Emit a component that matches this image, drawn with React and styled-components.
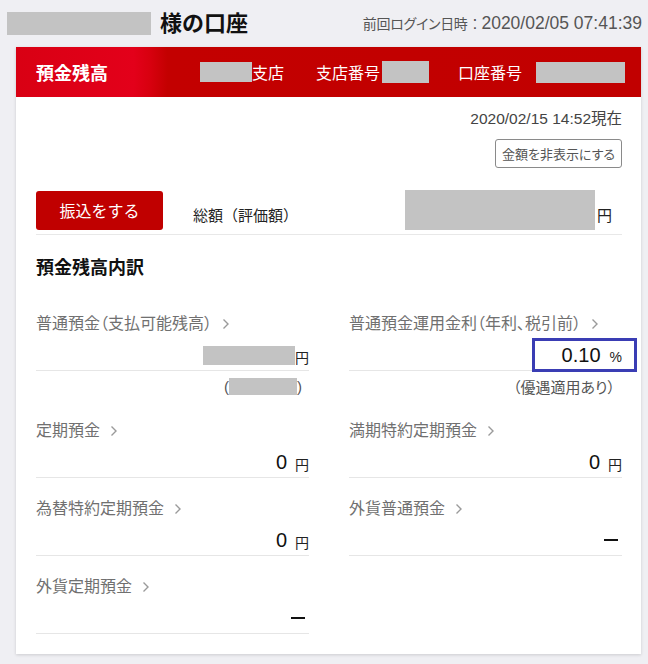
import React from "react";
import styled, { createGlobalStyle } from "styled-components";

const GlobalStyle = createGlobalStyle`
  body {
    margin: 0;
    background: #efeff3;
    font-family: "Liberation Sans", "Noto Sans CJK JP", sans-serif;
    color: #222;
  }
`;

const items = [
  { label: "普通預金（支払可能残高）", kind: "masked" },
  { label: "普通預金運用金利（年利、税引前）", kind: "rate" },
  { label: "定期預金", kind: "yen", amount: "0" },
  { label: "満期特約定期預金", kind: "yen", amount: "0" },
  { label: "為替特約定期預金", kind: "yen", amount: "0" },
  { label: "外貨普通預金", kind: "dash" },
  { label: "外貨定期預金", kind: "dash" },
];

function Chevron() {
  return (
    <ChevronIcon width="8" height="12" viewBox="0 0 8 12">
      <polyline points="1.5,1.5 6,6 1.5,10.5" fill="none" stroke="#9a9a9a" strokeWidth="1.4" />
    </ChevronIcon>
  );
}

function ItemValue({ item }) {
  if (item.kind === "masked") {
    return (
      <ValueRow>
        <Mask w={92} h={19} />
        <Yen tight>円</Yen>
      </ValueRow>
    );
  }
  if (item.kind === "rate") {
    return (
      <ValueRow>
        <Highlight>
          <Amount>0.10</Amount>
          <Percent>%</Percent>
        </Highlight>
      </ValueRow>
    );
  }
  if (item.kind === "dash") {
    return (
      <ValueRow>
        <Dash />
      </ValueRow>
    );
  }
  return (
    <ValueRow>
      <Amount>{item.amount}</Amount>
      <Yen>円</Yen>
    </ValueRow>
  );
}

function App() {
  return (
    <>
      <GlobalStyle />
      <TopBar>
        <Owner>
          <Mask w={144} h={23} />
          <PageTitle>様の口座</PageTitle>
        </Owner>
        <LastLogin>
          <LoginLabel>前回ログイン日時</LoginLabel>
          <Colon>:</Colon>
          2020/02/05 07:41:39
        </LastLogin>
      </TopBar>
      <Card>
        <RedBar>
          <BarTitle>預金残高</BarTitle>
          <BarInfo>
            <Mask w={52} h={20} />
            <BarLabel>支店</BarLabel>
            <BarLabel gap={30}>支店番号</BarLabel>
            <Mask w={47} h={22} />
            <BarLabel gap={29}>口座番号</BarLabel>
            <Mask w={89} h={21} gap={12} />
          </BarInfo>
        </RedBar>
        <Body>
          <AsOf>2020/02/15 14:52現在</AsOf>
          <HideRow>
            <HideButton>金額を非表示にする</HideButton>
          </HideRow>
          <TotalRow>
            <TransferButton>振込をする</TransferButton>
            <TotalLabel>総額（評価額）</TotalLabel>
            <TotalAmount>
              <Mask w={190} h={40} />
              <TotalYen>円</TotalYen>
            </TotalAmount>
          </TotalRow>
          <SectionTitle>預金残高内訳</SectionTitle>
          <Grid>
            {items.map((item) => (
              <Item key={item.label}>
                <Label>
                  {item.label}
                  <Chevron />
                </Label>
                <ItemValue item={item} />
                {item.kind === "masked" && (
                  <Note>
                    (<Mask w={68} h={17} />)
                  </Note>
                )}
                {item.kind === "rate" && <Note>（優遇適用あり）</Note>}
              </Item>
            ))}
          </Grid>
        </Body>
      </Card>
    </>
  );
}

export default App;

const TopBar = styled.div`
  display: flex;
  align-items: center;
  justify-content: space-between;
  padding: 12px 6px 0 7px;
  height: 23px;
`;

const Owner = styled.div`
  display: flex;
  align-items: center;
`;

const Mask = styled.span`
  display: inline-block;
  flex-shrink: 0;
  width: ${(p) => p.w}px;
  height: ${(p) => p.h}px;
  margin-left: ${(p) => p.gap || 0}px;
  background: #c3c3c3;
  vertical-align: middle;
`;

const PageTitle = styled.h1`
  margin: 0 0 0 9px;
  font-size: 22px;
  font-weight: 700;
  line-height: 24px;
  color: #111;
`;

const LastLogin = styled.div`
  display: flex;
  align-items: baseline;
  font-size: 17.5px;
  color: #555;
`;

const LoginLabel = styled.span`
  font-size: 14px;
  font-feature-settings: "palt";
  letter-spacing: -0.3px;
`;

const Colon = styled.span`
  margin: 0 4px 0 5px;
`;

const Card = styled.div`
  width: 625px;
  margin: 12px 0 10px 16px;
  background: #fff;
  box-shadow: 0 1px 3px rgba(0, 0, 0, 0.15);
`;

const RedBar = styled.div`
  display: flex;
  align-items: center;
  height: 50px;
  padding: 0 16px 0 20px;
  background: radial-gradient(circle at -110px 50%, #cf000d 0, #e3001a 228px, #d8000f 244px, #c30000 262px, #c10000 100%);
  color: #fff;
`;

const BarTitle = styled.div`
  font-size: 18px;
  font-weight: 700;
`;

const BarInfo = styled.div`
  display: flex;
  align-items: center;
  margin-left: auto;
`;

const BarLabel = styled.span`
  margin-left: ${(p) => p.gap || 0}px;
  margin-right: 2px;
  font-size: 16px;
`;

const Body = styled.div`
  padding: 12px 19px 20px 20px;
`;

const AsOf = styled.div`
  text-align: right;
  font-size: 15.5px;
  line-height: 20px;
  color: #444;
`;

const HideRow = styled.div`
  display: flex;
  justify-content: flex-end;
  margin-top: 10px;
`;

const HideButton = styled.button`
  height: 29px;
  padding: 0 6px;
  border: 1px solid #8a8a8a;
  border-radius: 3px;
  background: #fff;
  font-family: inherit;
  font-size: 13px;
  font-feature-settings: "palt";
  color: #555;
`;

const TotalRow = styled.div`
  display: flex;
  align-items: center;
  min-height: 42px;
  margin-top: 21px;
  padding: 0 10px 3px 0;
  border-bottom: 1px solid #e8e8e8;
`;

const TransferButton = styled.button`
  width: 127px;
  height: 39px;
  border: none;
  border-radius: 3px;
  background: #c00000;
  color: #fff;
  font-family: inherit;
  font-size: 16px;
  padding-bottom: 2px;
`;

const TotalLabel = styled.span`
  margin: 8px 0 0 30px;
  font-size: 15px;
`;

const TotalAmount = styled.div`
  display: flex;
  align-items: center;
  margin-left: auto;
`;

const TotalYen = styled.span`
  margin: 8px 0 0 2px;
  font-size: 15px;
`;

const SectionTitle = styled.h2`
  margin: 21px 0 0;
  font-size: 18px;
  font-weight: 700;
  line-height: 24px;
  color: #111;
`;

const Grid = styled.div`
  display: grid;
  grid-template-columns: 273px 273px;
  column-gap: 40px;
  row-gap: 21px;
  margin-top: 34px;
`;

const Item = styled.div`
  display: flex;
  flex-direction: column;
`;

const Label = styled.div`
  display: flex;
  align-items: center;
  font-size: 16px;
  font-feature-settings: "palt";
  line-height: 20px;
  color: #707070;
`;

const ChevronIcon = styled.svg`
  margin-left: 10px;
`;

const ValueRow = styled.div`
  display: flex;
  align-items: center;
  justify-content: flex-end;
  height: 30px;
  margin-top: 6px;
  border-bottom: 1px solid #e6e6e6;
`;

const Amount = styled.span`
  font-size: 20px;
  color: #111;
`;

const Yen = styled.span`
  margin-left: ${(p) => (p.tight ? 0 : 8)}px;
  margin-top: 3px;
  font-size: 14px;
  color: #222;
`;

const Percent = styled.span`
  margin: 3px 0 0 9px;
  font-size: 14px;
  color: #222;
`;

const Highlight = styled.span`
  display: flex;
  align-items: center;
  height: 28px;
  margin: -2px -15px -2px 0;
  padding: 0 12px 0 27px;
  border: 3px solid #3a3db4;
  background: #fff;
`;

const Dash = styled.span`
  width: 14px;
  height: 2px;
  margin-right: 4px;
  background: #111;
`;

const Note = styled.div`
  display: flex;
  align-items: center;
  justify-content: flex-end;
  height: 20px;
  margin: 5px 0 4px;
  padding-right: 7px;
  font-size: 15px;
  font-feature-settings: "palt";
  color: #555;
`;
